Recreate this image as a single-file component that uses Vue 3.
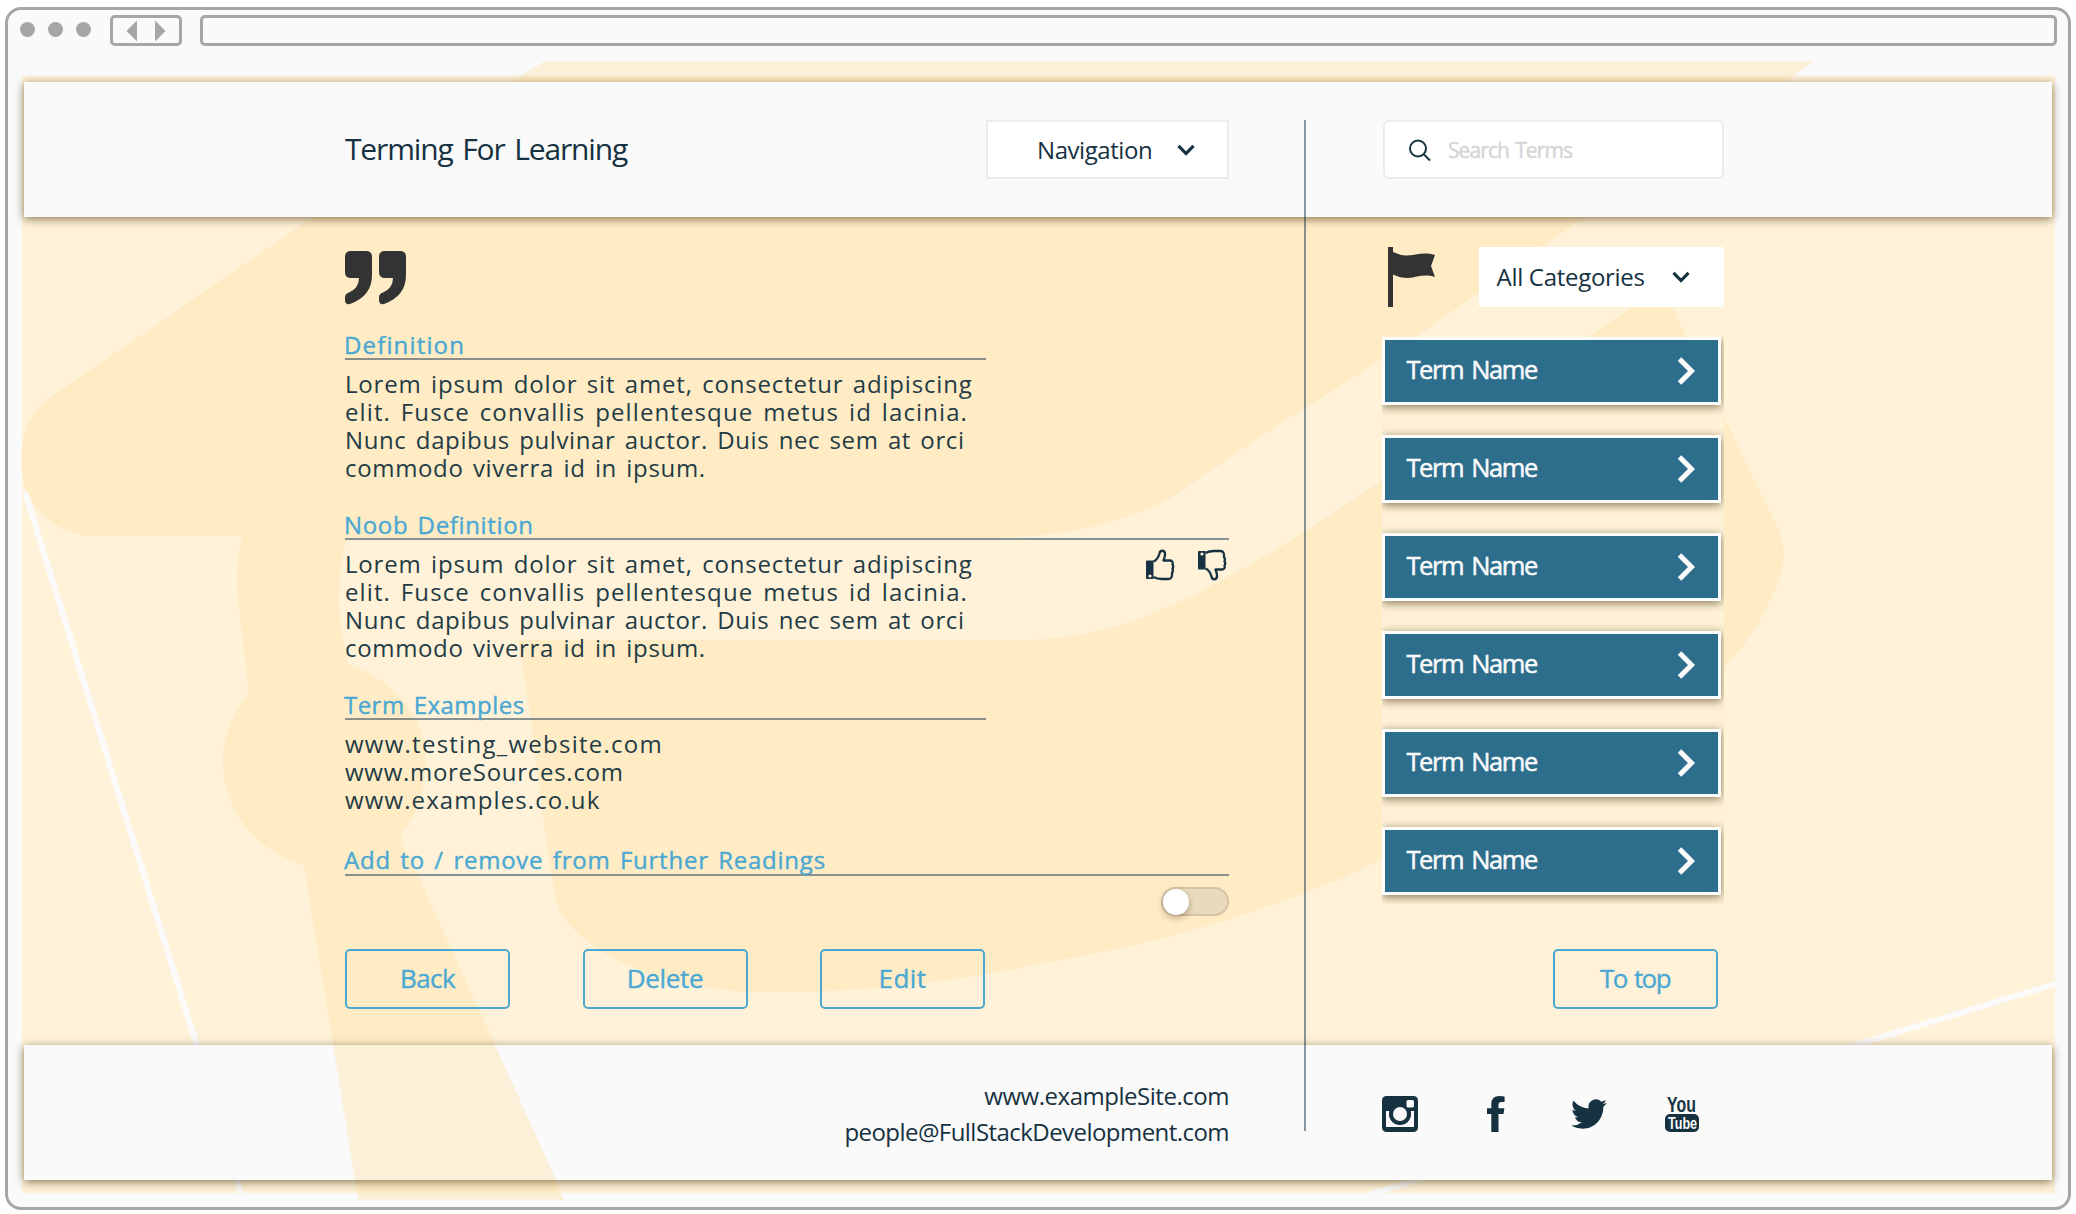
<script setup>
import { ref } from 'vue'

const lorem = [
  { text: 'Lorem ipsum dolor sit amet, consectetur adipiscing', ls: 0.81 },
  { text: 'elit. Fusce convallis pellentesque metus id lacinia.', ls: 1.11 },
  { text: 'Nunc dapibus pulvinar auctor. Duis nec sem at orci', ls: 0.62 },
  { text: 'commodo viverra id in ipsum.', ls: 0.66 }
]

const sections = [
  { title: 'Definition', ls: 1.15, lines: lorem, height: 180 },
  { title: 'Noob Definition', ls: 0.65, lines: lorem, height: 180, wide: true, votes: true },
  {
    title: 'Term Examples',
    ls: 0.46,
    height: 155,
    lines: [
      { text: 'www.testing_website.com', ls: 1.25 },
      { text: 'www.moreSources.com', ls: 0.72 },
      { text: 'www.examples.co.uk', ls: 1.12 }
    ]
  }
]

const actions = [
  { label: 'Back', ls: -0.6 },
  { label: 'Delete', ls: -0.3 },
  { label: 'Edit', ls: 0.4 }
]

const terms = Array.from({ length: 6 }, (_, i) => ({ id: i, name: 'Term Name' }))
const further = ref(false)
</script>

<template>
  <div class="page">
    <div class="frame">
      <div class="chrome">
        <div class="dots"><i></i><i></i><i></i></div>
        <div class="arrows">
          <svg width="66" height="25" viewBox="0 0 66 25" fill="#a6a6a6">
            <path d="M24 2.500V23.500L13.500 13z" />
            <path d="M42 2.500V23.500L52.500 13z" />
          </svg>
        </div>
        <div class="url"></div>
      </div>

      <div class="site">
        <svg class="art" width="2076" height="1214" viewBox="0 0 2076 1214">
          <rect x="22" y="76" width="2033" height="1117" fill="#fff2d8" />
          <path d="M25 492L196 1043L241 1193M1368 1195L1852 1046L2055 984" fill="none" stroke="#fafafa" stroke-width="6" />
          <g fill="rgb(255,227,173)" fill-opacity=".44">
            <path d="M545 61H1815L1584 217L1419 335L1310 405C1250 442 1210 472 1167 500C1110 528 1060 537 980 538H347Q333 590 343 640L348 665C385 675 426 712 426 760Q426 790 413 817L400 838L420 880L495 1045L564 1200H358L333 1045L304 865C255 850 223 810 223 760Q223 725 249 693L237 593Q236 560 242 536H92C55 534 20 505 21 457Q22 420 47 400L310 219L519 77Z" />
            <path d="M518 640H1030C1100 637 1150 618 1217 583Q1260 560 1303 533L1380 482L1592 335L1650 295L1672 306L1723 415L1780 533Q1789 560 1775 590Q1745 660 1690 695Q1540 785 1340 879Q1190 940 1048 962Q900 994 759 992C660 990 570 950 556 900L549 860L541 800L531 720Z" />
          </g>
        </svg>

        <header class="bar top">
          <h1>Terming For Learning</h1>
          <div class="select nav">
            <span>Navigation</span>
            <svg width="18" height="12" viewBox="0 0 18 12"><path d="M1.500 1.800L9 9.500L16.500 1.800" /></svg>
          </div>
          <div class="search">
            <svg width="24" height="24" viewBox="0 0 24 24" fill="none" stroke="#16313f" stroke-width="2">
              <circle cx="10" cy="10.500" r="8" /><path d="M16 16.500L22 22.500" />
            </svg>
            <span>Search Terms</span>
          </div>
        </header>

        <main class="content">
          <div class="entry">
            <svg class="quotes" width="62" height="54" viewBox="0 0 62 54" fill="#333">
              <path d="M6 0H21Q27 0 27 6V24Q27 45 5 53Q0 54 0 49V46Q0 43 4 41.500Q14 37 14 27H6Q0 27 0 21V6Q0 0 6 0z" />
              <path d="M40 0H55Q61 0 61 6V24Q61 45 39 53Q34 54 34 49V46Q34 43 38 41.500Q48 37 48 27H40Q34 27 34 21V6Q34 0 40 0z" />
            </svg>

            <section v-for="s in sections" :key="s.title" class="block" :class="{ wide: s.wide }" :style="{ height: s.height + 'px' }">
              <h2 :style="{ letterSpacing: s.ls + 'px' }">{{ s.title }}</h2>
              <div class="body">
                <p><span v-for="l in s.lines" :key="l.text" :style="{ letterSpacing: l.ls + 'px' }">{{ l.text }}</span></p>
                <div v-if="s.votes" class="votes">
                  <svg v-for="d in ['up', 'down']" :key="d" :class="d" width="30" height="32" viewBox="0 0 30 32">
                    <path d="M1 12.500Q1 11.500 2 11.500H8.500V30H2Q1 30 1 29z" fill="#16313f" />
                    <path d="M8.500 12.500C12 11 13.500 8 14.500 4.500C15 .8 19.500 .8 20 4.500C20.300 7 19.500 9 18.500 11.500H25Q28.500 12 27.500 15.500Q29 17.500 27.500 19.500Q28.500 22 27 24Q27.500 30 23.500 30H17Q12 30 8.500 28" fill="none" stroke="#16313f" stroke-width="2.300" stroke-linejoin="round" />
                    <circle cx="5" cy="27" r="1.600" fill="#fff2d8" />
                  </svg>
                </div>
              </div>
            </section>

            <section class="block wide last">
              <h2>Add to / remove from Further Readings</h2>
              <button class="toggle" :class="{ on: further }" aria-label="Further Readings" @click="further = !further"><i></i></button>
            </section>

            <div class="actions">
              <button v-for="a in actions" :key="a.label" class="btn" :style="{ letterSpacing: a.ls + 'px' }">{{ a.label }}</button>
            </div>
          </div>

          <aside class="side">
            <div class="filter">
              <svg width="48" height="60" viewBox="0 0 48 60" fill="#333">
                <path d="M0 0H5V5Q12 8.500 19 8.500C28 8.500 34 4.500 47 8L43 19L47 30C36 26.500 29 30.500 20 31Q12 31 5 27.500V60H0z" />
              </svg>
              <div class="select cats">
                <span>All Categories</span>
                <svg width="18" height="12" viewBox="0 0 18 12"><path d="M1.500 1.800L9 9.500L16.500 1.800" /></svg>
              </div>
            </div>
            <div class="terms">
              <div v-for="t in terms" :key="t.id" class="term">
                <span>{{ t.name }}</span>
                <svg width="20" height="28" viewBox="0 0 20 28" fill="none" stroke="#fafafa" stroke-width="5"><path d="M2.500 2L14.500 14L2.500 26" /></svg>
              </div>
            </div>
            <button class="btn up-btn">To top</button>
          </aside>
        </main>

        <footer class="bar bottom">
          <svg class="leg" width="240" height="135" viewBox="0 0 240 135"><path d="M9 0H171L232 135H31z" fill="#fcf0d8" /></svg>
          <div class="contact">
            <span class="c1">www.exampleSite.com</span>
            <span class="c2">people@FullStackDevelopment.com</span>
          </div>
          <div class="social">
            <svg width="36" height="36" viewBox="0 0 36 36">
              <rect width="36" height="36" rx="4.500" fill="#16313f" />
              <path d="M4 15H7.600A10.800 10.800 0 1 0 28.400 15H32V31H4z" fill="#fafafa" />
              <circle cx="18" cy="18" r="11" fill="#16313f" /><circle cx="18" cy="18" r="7" fill="#fafafa" />
              <rect x="24.500" y="4" width="7.500" height="7.500" rx="1.500" fill="#fafafa" />
            </svg>
            <svg width="18" height="36" viewBox="0 0 18 36" fill="#16313f">
              <path d="M17.600.4V6H14.300Q11.500 6 11.500 8.700V12.300H17.400L16.500 18H11.500V36H4.300V18H0V12.300H4.300V8.200Q4.300 0 12.500 0 15.600 0 17.600.4z" />
            </svg>
            <svg width="36" height="30" viewBox="0 0 36 29.300" fill="#16313f">
              <path d="M36 3.500a14.800 14.800 0 0 1-4.200 1.200A7.400 7.400 0 0 0 35 .6a14.700 14.700 0 0 1-4.700 1.800 7.400 7.400 0 0 0-12.600 6.700A21 21 0 0 1 2.500 1.400a7.400 7.400 0 0 0 2.300 9.900 7.400 7.400 0 0 1-3.400-1v.1a7.400 7.400 0 0 0 6 7.300 7.400 7.400 0 0 1-3.400.1 7.400 7.400 0 0 0 6.900 5.200A14.900 14.900 0 0 1 0 26a21 21 0 0 0 11.300 3.300c13.600 0 21-11.300 21-21v-1A15 15 0 0 0 36 3.500z" />
            </svg>
            <svg class="tube" width="34" height="36" viewBox="0 0 34 36">
              <text class="yt" transform="translate(2 16) scale(.74 1)" font-size="21.500" fill="#16313f">You</text>
              <rect y="18" width="34" height="18" rx="5" fill="#16313f" />
              <text class="yt" transform="translate(3 33) scale(.74 1)" font-size="17" fill="#fafafa">Tube</text>
            </svg>
          </div>
        </footer>
      </div>
      <div class="divider"></div>
    </div>
  </div>
</template>

<style>
body { background: #fff; }
</style>

<style scoped>
* { box-sizing: border-box; }
.page {
  position: relative;
  width: 2076px;
  height: 1214px;
  padding: 7px 5px 4px;
  overflow: hidden;
  background: #fff;
  color: #16313f;
  font: 24px/28px "Open Sans", "Noto Sans", sans-serif;
}
.frame {
  width: 2066px;
  height: 1203px;
  border: 3px solid #a6a6a6;
  border-radius: 16px;
  background: #fafafa;
}
.chrome { display: flex; height: 72px; padding: 5px 11px 0 12px; align-items: flex-start; }
.dots { display: flex; gap: 13px; margin-top: 7px; width: 90px; }
.dots i { width: 15px; height: 15px; border-radius: 50%; background: #a6a6a6; }
.arrows { width: 72px; height: 31px; border: 3px solid #a6a6a6; border-radius: 5px; }
.arrows svg { display: block; }
.url { flex: 1; height: 31px; margin-left: 18px; border: 3px solid #a6a6a6; border-radius: 5px; }

.site { width: 2028px; margin-left: 16px; }
.art { position: absolute; left: 0; top: 0; }
.bar {
  position: relative;
  display: flex;
  height: 135px;
  background: #fafafb;
  box-shadow: 0 2px 9px rgba(70, 50, 10, .65);
}
.top { padding: 38px 0 0 321px; }
h1 {
  width: 641px;
  margin: 0;
  padding-top: 9px;
  font-size: 30px;
  font-weight: 400;
  line-height: 40px;
  letter-spacing: -1.150px;
  word-spacing: 3px;
}
.select { display: flex; align-items: center; background: #fff; }
.select path { fill: none; stroke: #16313f; stroke-width: 3.200px; }
.nav { width: 243px; height: 59px; padding-left: 49px; border: 2px solid #ececec; letter-spacing: -.43px; }
.nav svg { margin-left: 25px; }
.search {
  display: flex;
  align-items: center;
  width: 341px;
  height: 59px;
  margin-left: 154px;
  padding-left: 23px;
  border: 2px solid #ececec;
  border-radius: 6px;
  background: #fff;
  color: #d6d6d6;
  font-size: 21px;
  letter-spacing: -.9px;
  word-spacing: 1.500px;
  -webkit-text-stroke: .5px #d6d6d6;
}
.search svg { margin-right: 16px; }

.content { position: relative; display: flex; height: 828px; padding: 30px 0 0 321px; }
.entry { width: 884px; padding-top: 4px; }
.quotes { display: block; margin: 0 0 26px; }
.block { width: 641px; word-spacing: 2.500px; }
.wide { width: 884px; }
h2 {
  height: 29px;
  margin: 0;
  border-bottom: 2px solid rgba(20, 50, 75, .5);
  color: #4ba8d3;
  font-size: 24px;
  font-weight: 400;
  line-height: 28px;
  text-indent: -1px;
  -webkit-text-stroke: .4px #4ba8d3;
}
.body { display: flex; justify-content: space-between; color: #233b45; }
p { margin: 10px 0 0; }
p span { display: block; white-space: nowrap; }
.votes { display: flex; gap: 22px; padding: 9px 2px 0 0; }
.down { transform: scaleY(-1); }
.last { height: 103px; }
.last h2 { height: 30px; letter-spacing: .76px; }
.toggle {
  display: block;
  width: 68px;
  height: 29px;
  margin: 11px 0 0 auto;
  padding: 0;
  border: 2px solid rgba(150, 130, 100, .25);
  border-radius: 15px;
  background: #e9dabc;
}
.toggle i { display: block; width: 26px; height: 26px; margin-top: -.5px; border-radius: 50%; background: #fff; box-shadow: 0 3px 7px rgba(90, 70, 40, .4); }
.toggle.on i { margin-left: auto; }
.actions { display: flex; justify-content: space-between; width: 640px; }
.btn {
  width: 165px;
  height: 60px;
  padding: 0 0 3px;
  border: 2px solid #4ba8d0;
  border-radius: 5px;
  background: transparent;
  color: #4ba8d3;
  font: 26px/40px "Open Sans", "Noto Sans", sans-serif;
  -webkit-text-stroke: .4px #4ba8d3;
}

.side { width: 343px; margin-left: 152.500px; }
.filter { display: flex; justify-content: space-between; width: 342px; height: 60px; padding-left: 6px; }
.cats { width: 245px; height: 60px; padding-left: 18px; letter-spacing: -.29px; }
.cats svg { margin-left: 27px; }
.terms {
  display: flex;
  flex-direction: column;
  gap: 30px;
  width: 342px;
  height: 567px;
  margin-top: 30px;
  overflow: hidden;
  background: #fff2d8;
}
.term {
  flex: none;
  display: flex;
  justify-content: space-between;
  align-items: center;
  width: 339px;
  height: 68px;
  padding: 0 22px 4px;
  border: 3px solid #fdfdfd;
  background: #2d6e8d;
  box-shadow: 0 2px 9px rgba(70, 50, 10, .65);
  color: #fafafa;
  font-size: 25.500px;
  letter-spacing: -1.450px;
  word-spacing: 3px;
  -webkit-text-stroke: .5px #fafafa;
}
.term svg { margin: 4px -1px 0 0; }
.up-btn { display: block; margin: 45px 0 0 171px; letter-spacing: -1.600px; word-spacing: 2px; }

.bottom { padding-top: 51px; }
.bottom > * { position: relative; }
.bottom .leg { position: absolute; left: 300px; top: 0; }
.contact { display: flex; flex-direction: column; align-items: flex-end; width: 1205px; margin-top: -18px; line-height: 36px; }
.c1 { letter-spacing: -.47px; }
.c2 { letter-spacing: -.55px; }
.social { display: flex; align-items: center; width: 317px; height: 36px; margin-left: 153px; }
.social svg:nth-child(2) { margin-left: 69px; }
.social svg:nth-child(3) { margin-left: 66px; }
.social svg:nth-child(4) { margin-left: 58px; }
.tube { overflow: visible; }
.yt { font-family: "Liberation Sans", sans-serif; font-weight: 700; }
.divider { position: absolute; left: 1304px; top: 120px; width: 2px; height: 1011px; background: rgba(20, 50, 75, .5); }
</style>
